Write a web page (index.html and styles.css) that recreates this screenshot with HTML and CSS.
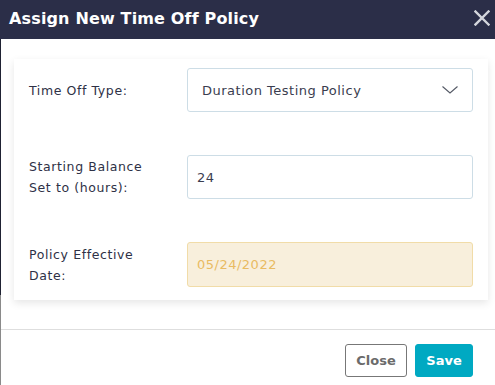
FILE: index.html
```html
<!DOCTYPE html>
<html>
<head>
<meta charset="utf-8">
<link rel="stylesheet" href="styles.css">
</head>
<body>
<div class="modal">
  <div class="header">
    <h1 class="title">Assign New Time Off Policy</h1>
    <svg class="close-x" width="16" height="16" viewBox="0 0 16 16"><path d="M1.5 1.5 L14.5 14.5 M14.5 1.5 L1.5 14.5" stroke="#d4d6dc" stroke-width="2.4" stroke-linecap="square"/></svg>
  </div>
  <div class="body">
    <div class="card">
      <div class="row">
        <div class="label">Time Off Type:</div>
        <div class="field select">
          <span>Duration Testing Policy</span>
          <svg class="chev" width="16" height="8" viewBox="0 0 16 8"><path d="M0.5 0.5 L8 7 L15.5 0.5" fill="none" stroke="#555a66" stroke-width="1.1"/></svg>
        </div>
      </div>
      <div class="row">
        <div class="label">Starting Balance<br>Set to (hours):</div>
        <div class="field input">24</div>
      </div>
      <div class="row">
        <div class="label">Policy Effective<br>Date:</div>
        <div class="field date">05/24/2022</div>
      </div>
    </div>
  </div>
  <div class="footer">
    <button class="btn btn-close">Close</button>
    <button class="btn btn-save">Save</button>
  </div>
</div>
</body>
</html>
```
FILE: styles.css
```css
html, body {
  margin: 0;
  padding: 0;
}
body {
  width: 495px;
  height: 385px;
  overflow: hidden;
  background: linear-gradient(to bottom, #1f2233 0, #1f2233 295px, #8a8a8a 295px);
  font-family: "DejaVu Sans", sans-serif;
}
.modal {
  margin-left: 1px;
  height: 385px;
  background: #fff;
  display: flex;
  flex-direction: column;
}
.header {
  height: 39px;
  background: #2b2e48;
  display: flex;
  align-items: center;
  justify-content: space-between;
  padding: 0 5px 0 9px;
  margin-left: -1px;
}
.title {
  margin: 0 0 2px 0;
  color: #fff;
  font-size: 16px;
  font-weight: bold;
  letter-spacing: 0.15px;
}
.close-x {
  margin-top: -4px;
}
.body {
  padding: 20px 7px 0 13px;
  height: 241px;
}
.card {
  height: 241px;
  box-sizing: border-box;
  background: #fff;
  box-shadow: 0 3px 8px rgba(0,0,0,0.10);
  padding: 9px 15px 0 15px;
  display: flex;
  flex-direction: column;
  gap: 43px;
}
.row {
  display: flex;
  align-items: center;
}
.label {
  width: 158px;
  font-size: 12.5px;
  line-height: 21px;
  letter-spacing: 0.6px;
  color: #2e3146;
}
.field {
  box-sizing: border-box;
  width: 286px;
  height: 44px;
  border: 1px solid #cddde6;
  border-radius: 3px;
  display: flex;
  align-items: center;
  font-size: 13px;
  letter-spacing: 0.5px;
  color: #3a3d4f;
}
.select {
  padding: 0 14px 0 14px;
  justify-content: space-between;
}
.input {
  padding-left: 9px;
}
.date {
  padding-left: 9px;
  background: #f8efdc;
  border-color: #f1dca8;
  color: #e9bb62;
  height: 45px;
}
.footer {
  margin-top: 29px;
  border-top: 1px solid #dedede;
  padding: 14px 22px 0 0;
  display: flex;
  justify-content: flex-end;
  gap: 8px;
}
.btn {
  font-family: "DejaVu Sans", sans-serif;
  font-weight: bold;
  font-size: 13px;
  height: 33px;
  border-radius: 3px;
  padding: 0;
  cursor: pointer;
}
.btn-close {
  width: 62px;
  background: #fff;
  border: 1px solid #777;
  color: #6b6b6b;
}
.btn-save {
  width: 58px;
  background: #00a9c2;
  border: 1px solid #00a9c2;
  color: #fff;
}
```
